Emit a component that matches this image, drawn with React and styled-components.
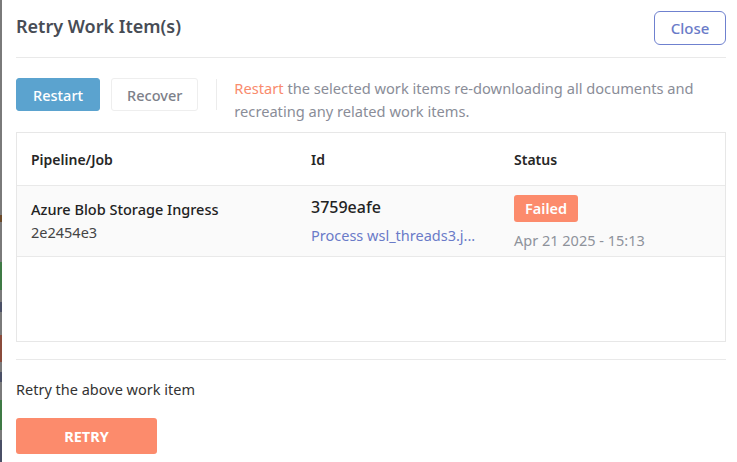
import React from 'react';
import styled, { createGlobalStyle } from 'styled-components';

const GlobalStyle = createGlobalStyle`
  * { box-sizing: border-box; }
  html, body {
    margin: 0;
    padding: 0;
    background: #fff;
    font-family: "Noto Sans", "Open Sans", sans-serif;
  }
`;

const Page = styled.div`
  display: flex;
  width: 737px;
  height: 462px;
  overflow: hidden;
`;

/* Dimmed page peeking behind the modal */
const Backdrop = styled.div`
  width: 2px;
  flex-shrink: 0;
  background: linear-gradient(
    to bottom,
    #7a7a7a 0 215px,
    #6b4a2a 215px 222px,
    #7a7a7a 222px 262px,
    #3f7a45 262px 290px,
    #7a7a7a 290px 302px,
    #4a4f66 302px 312px,
    #7a7a7a 312px 335px,
    #8a4b3b 335px 362px,
    #7a7a7a 362px 372px,
    #4a4f66 372px 382px,
    #7a7a7a 382px 400px,
    #3f7a45 400px 430px,
    #7a7a7a 430px 440px,
    #4a4f66 440px 462px
  );
`;

const Modal = styled.div`
  flex: 1;
  padding: 0 11px 0 14px;
`;

const Header = styled.div`
  height: 58px;
  display: flex;
  align-items: center;
  justify-content: space-between;
  border-bottom: 1px solid #e9e9e9;
  padding-top: 2px;
`;

const Title = styled.h2`
  margin: 0;
  font-size: 18px;
  font-weight: 600;
  color: #474c55;
  transform: translateY(-4px);
`;

const CloseButton = styled.button`
  font-family: inherit;
  width: 72px;
  height: 34px;
  border: 1px solid #6f81cf;
  border-radius: 6px;
  background: #fff;
  color: #6a7bc8;
  font-size: 15px;
  font-weight: 500;
  transform: translateY(-2px);
`;

const ActionBar = styled.div`
  display: flex;
  align-items: flex-start;
  margin-top: 20px;
`;

const ModeButton = styled.button`
  font-family: inherit;
  height: 33px;
  padding: 0 ${(p) => (p.$active ? '16px' : '15px')};
  margin-right: 11px;
  border-radius: 3px;
  font-size: 14.5px;
  font-weight: 500;
  border: 1px solid ${(p) => (p.$active ? '#5ba3cf' : '#eeeeee')};
  background: ${(p) => (p.$active ? '#5ba3cf' : '#fff')};
  color: ${(p) => (p.$active ? '#fff' : '#7d8089')};
`;

const Separator = styled.div`
  width: 1px;
  height: 31px;
  background: #ececec;
  margin: 1px 17px 0 7px;
`;

const Description = styled.p`
  margin: -1px 0 0;
  font-size: 14.65px;
  line-height: 23px;
  color: #8a8d98;
`;

const Highlight = styled.span`
  color: #f98b6d;
`;

const Table = styled.div`
  margin-top: 9px;
  height: 210px;
  border: 1px solid #e7e7e7;
`;

const Row = styled.div`
  display: grid;
  grid-template-columns: 280px 203px 1fr;
  padding: 0 14px;
  border-bottom: 1px solid #e9e9e9;
  height: ${(p) => p.$height}px;
  background: ${(p) => p.$bg || '#fff'};
  align-items: ${(p) => (p.$top ? 'start' : 'center')};
`;

const HeadCell = styled.div`
  font-size: 14px;
  font-weight: 600;
  color: #262626;
`;

const Cell = styled.div`
  display: flex;
  flex-direction: column;
  padding-top: ${(p) => p.$pt || 0}px;
`;

const Primary = styled.div`
  font-size: ${(p) => p.$size || 14.5}px;
  font-weight: 500;
  color: #222;
  line-height: ${(p) => p.$lh || 20}px;
`;

const Secondary = styled.div`
  font-size: 14.5px;
  color: ${(p) => p.$color || '#444'};
  line-height: 20px;
  margin-top: ${(p) => p.$mt || 0}px;
  white-space: nowrap;
`;

const Badge = styled.span`
  align-self: flex-start;
  background: #fc8b6c;
  color: #fff;
  font-size: 14.5px;
  font-weight: 600;
  padding: 0 11px;
  height: 27px;
  line-height: 27px;
  border-radius: 3px;
`;

const Footer = styled.div`
  margin-top: 17px;
  border-top: 1px solid #e9e9e9;
  padding-top: 19px;
`;

const FooterText = styled.p`
  margin: 0;
  font-size: 14.5px;
  color: #333;
  line-height: 20px;
`;

const RetryButton = styled.button`
  font-family: inherit;
  margin-top: 19px;
  width: 141px;
  height: 36px;
  border: none;
  border-radius: 3px;
  background: #fc8b6c;
  color: #fff;
  font-size: 14.5px;
  font-weight: 700;
  text-transform: uppercase;
`;

export default function App() {
  return (
    <>
      <GlobalStyle />
      <Page>
        <Backdrop />
        <Modal>
          <Header>
            <Title>Retry Work Item(s)</Title>
            <CloseButton>Close</CloseButton>
          </Header>

          <ActionBar>
            <ModeButton $active>Restart</ModeButton>
            <ModeButton>Recover</ModeButton>
            <Separator />
            <Description>
              <Highlight>Restart</Highlight> the selected work items re-downloading all documents and
              <br />
              recreating any related work items.
            </Description>
          </ActionBar>

          <Table>
            <Row $height={53}>
              <HeadCell>Pipeline/Job</HeadCell>
              <HeadCell>Id</HeadCell>
              <HeadCell>Status</HeadCell>
            </Row>
            <Row $height={71} $bg="#fafafa" $top>
              <Cell $pt={13}>
                <Primary>Azure Blob Storage Ingress</Primary>
                <Secondary $mt={3}>2e2454e3</Secondary>
              </Cell>
              <Cell $pt={10}>
                <Primary $size={16} $lh={22}>3759eafe</Primary>
                <Secondary $color="#6a7bc8" $mt={7}>Process wsl_threads3.j...</Secondary>
              </Cell>
              <Cell $pt={9}>
                <Badge>Failed</Badge>
                <Secondary $color="#8e929a" $mt={8}>Apr 21 2025 - 15:13</Secondary>
              </Cell>
            </Row>
          </Table>

          <Footer>
            <FooterText>Retry the above work item</FooterText>
            <RetryButton>Retry</RetryButton>
          </Footer>
        </Modal>
      </Page>
    </>
  );
}
